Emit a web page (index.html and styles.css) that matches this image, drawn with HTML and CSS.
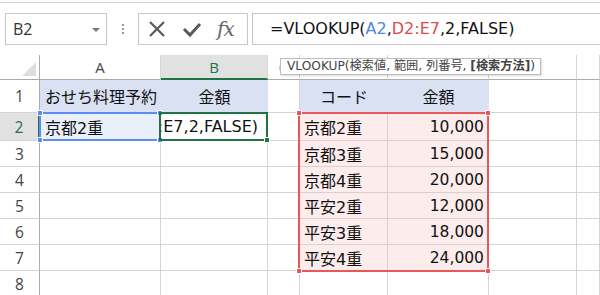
FILE: index.html
```html
<!DOCTYPE html>
<html lang="ja">
<head>
  <meta charset="UTF-8">
  <title>VLOOKUP</title>
  <link rel="stylesheet" href="styles.css">
</head>
<body>
  <div class="toolbar">
    <div class="namebox">
      <span>B2</span>
      <span class="caret"></span>
    </div>
    <div class="grip"><i></i><i></i><i></i></div>
    <div class="buttons">
      <svg width="20" height="20" viewBox="0 0 20 20"><path d="M3 3 L17 17 M17 3 L3 17" stroke="#5a5a5a" stroke-width="2.2" fill="none"/></svg>
      <svg width="20" height="20" viewBox="0 0 20 20"><path d="M2 10 L8 16 L18 5" stroke="#5a5a5a" stroke-width="3" fill="none"/></svg>
      <span class="fx">fx</span>
    </div>
    <div class="formula">=VLOOKUP(<span class="ref-a">A2</span>,<span class="ref-d">D2:E7</span>,2,FALSE)</div>
  </div>

  <div class="sheet">
    <div class="grid">
      <div class="hd corner"><span class="tri"></span></div>
      <div class="hd">A</div>
      <div class="hd sel-col">B</div>
      <div class="hd">C</div>
      <div class="hd">D</div>
      <div class="hd">E</div>
      <div class="hd">F</div>
      <div class="hd"></div>

      <div class="rh">1</div>
      <div class="c head">おせち料理予約</div>
      <div class="c head center">金額</div>
      <div class="c"></div>
      <div class="c head center">コード</div>
      <div class="c head center">金額</div>
      <div class="c"></div>
      <div class="c"></div>

      <div class="rh sel-row">2</div>
      <div class="c key">京都2重</div>
      <div class="c edit"><span>=VLOOKUP(A2,D2:E7,2,FALSE)</span></div>
      <div class="c"></div>
      <div class="c pink">京都2重</div>
      <div class="c pink num">10,000</div>
      <div class="c"></div>
      <div class="c"></div>

      <div class="rh">3</div>
      <div class="c"></div><div class="c"></div><div class="c"></div>
      <div class="c pink">京都3重</div>
      <div class="c pink num">15,000</div>
      <div class="c"></div><div class="c"></div>

      <div class="rh">4</div>
      <div class="c"></div><div class="c"></div><div class="c"></div>
      <div class="c pink">京都4重</div>
      <div class="c pink num">20,000</div>
      <div class="c"></div><div class="c"></div>

      <div class="rh">5</div>
      <div class="c"></div><div class="c"></div><div class="c"></div>
      <div class="c pink">平安2重</div>
      <div class="c pink num">12,000</div>
      <div class="c"></div><div class="c"></div>

      <div class="rh">6</div>
      <div class="c"></div><div class="c"></div><div class="c"></div>
      <div class="c pink">平安3重</div>
      <div class="c pink num">18,000</div>
      <div class="c"></div><div class="c"></div>

      <div class="rh">7</div>
      <div class="c"></div><div class="c"></div><div class="c"></div>
      <div class="c pink">平安4重</div>
      <div class="c pink num">24,000</div>
      <div class="c"></div><div class="c"></div>

      <div class="rh">8</div>
      <div class="c"></div><div class="c"></div><div class="c"></div>
      <div class="c"></div><div class="c"></div><div class="c"></div><div class="c"></div>
    </div>

    <div class="range range-a">
      <i class="h tl"></i><i class="h tr"></i><i class="h bl"></i><i class="h br"></i>
    </div>
    <div class="range range-d">
      <i class="h tl"></i><i class="h tr"></i><i class="h bl"></i><i class="h br"></i>
    </div>
    <div class="active"><i class="fill"></i></div>

    <div class="tip">VLOOKUP(検索値, 範囲, 列番号, <b>[検索方法]</b>)</div>
  </div>
</body>
</html>
```

FILE: styles.css
```css
* {
  margin: 0;
  padding: 0;
  box-sizing: border-box;
}

html,
body {
  width: 600px;
  height: 295px;
  overflow: hidden;
  background: #fff;
  font-family: "DejaVu Sans", "Noto Sans CJK JP", sans-serif;
  color: #111;
}

/* formula bar */
.toolbar {
  margin-top: 2px;
  border-top: 1px solid #d4d4d4;
  height: 53px;
  padding: 10px 0 0 5px;
  display: flex;
  align-items: flex-start;
}

.namebox {
  width: 102px;
  height: 32px;
  border: 1px solid #c6c6c6;
  display: flex;
  align-items: center;
  justify-content: space-between;
  padding: 0 6px 0 7px;
  font-family: "Open Sans", sans-serif;
  font-size: 16px;
  color: #333;
}

.caret {
  border-left: 4px solid transparent;
  border-right: 4px solid transparent;
  border-top: 4px solid #777;
  margin-top: 2px;
}

.grip {
  width: 31px;
  height: 32px;
  display: flex;
  flex-direction: column;
  align-items: center;
  justify-content: center;
  gap: 2px;
}

.grip i {
  width: 2px;
  height: 2px;
  background: #999;
}

.buttons {
  width: 110px;
  height: 32px;
  border: 1px solid #c6c6c6;
  display: flex;
  align-items: center;
  padding-left: 8px;
  gap: 15px;
}

.fx {
  font-family: "DejaVu Serif", "Liberation Serif", serif;
  font-style: italic;
  font-size: 20px;
  color: #666;
  letter-spacing: -1px;
}

.formula {
  margin-left: 4px;
  flex: 1;
  height: 32px;
  border: 1px solid #c6c6c6;
  border-right: none;
  padding-left: 17px;
  font-size: 16px;
  line-height: 30px;
  color: #111;
}

.ref-a {
  color: #4f86e8;
}

.ref-d {
  color: #e0494d;
}

/* sheet */
.sheet {
  position: relative;
}

.grid {
  display: grid;
  grid-template-columns: 40px 121px 107px 32px 88px 101px 88px 1fr;
  grid-template-rows: 25px 33px 28px repeat(6, 26px);
}

.hd {
  border-right: 1px solid #d4d4d4;
  border-bottom: 1px solid #ababab;
  display: flex;
  align-items: center;
  justify-content: center;
  font-family: "Open Sans", sans-serif;
  font-size: 15px;
  color: #444;
}

.corner {
  border-right: 1px solid #ababab;
  position: relative;
}

.tri {
  position: absolute;
  right: 3px;
  bottom: 3px;
  border-left: 14px solid transparent;
  border-bottom: 14px solid #dedede;
}

.sel-col {
  background: #e1e1e1;
  color: #217346;
  border-bottom: 2px solid #217346;
}

.rh {
  border-right: 1px solid #ababab;
  border-bottom: 1px solid #d4d4d4;
  display: flex;
  align-items: center;
  justify-content: center;
  font-family: "Open Sans", sans-serif;
  font-size: 15.5px;
  color: #444;
}

.sel-row {
  background: #e1e1e1;
  color: #217346;
  border-right: 2px solid #217346;
}

.c {
  border-right: 1px solid #d4d4d4;
  border-bottom: 1px solid #d4d4d4;
  display: flex;
  align-items: center;
  padding: 0 4px;
  font-size: 16px;
  white-space: nowrap;
  overflow: hidden;
}

.head {
  background: #d9e1f2;
  border-right-color: #d9e1f2;
  padding-left: 5px;
}

.center {
  justify-content: center;
}

.key {
  background: #eaf0fb;
  padding-left: 5px;
}

.edit {
  justify-content: flex-end;
  padding-right: 9px;
  font-size: 16px;
}

.edit span {
  flex-shrink: 0;
}

.pink {
  background: #fcecec;
  border-color: #d9cfcf;
}

.num {
  justify-content: flex-end;
  font-size: 15.5px;
}

/* range highlights */
.range {
  position: absolute;
  border: 2px solid;
}

.range-a {
  left: 39px;
  top: 57px;
  width: 122px;
  height: 29px;
  border-color: #5b8ef0;
}

.range-d {
  left: 298px;
  top: 57px;
  width: 191px;
  height: 160px;
  border-color: #e8585b;
}

.h {
  position: absolute;
  width: 6px;
  height: 6px;
  border: 1px solid #fff;
}

.range-a .h {
  background: #5b8ef0;
}

.range-d .h {
  background: #e8585b;
}

.tl {
  left: -4px;
  top: -4px;
}

.tr {
  right: -4px;
  top: -4px;
}

.bl {
  left: -4px;
  bottom: -4px;
}

.br {
  right: -4px;
  bottom: -4px;
}

.active {
  position: absolute;
  left: 159px;
  top: 57px;
  width: 109px;
  height: 29px;
  border: 2px solid #217346;
}

.fill {
  position: absolute;
  right: -4px;
  bottom: -4px;
  width: 6px;
  height: 6px;
  background: #217346;
  border: 1px solid #fff;
}

.tip {
  position: absolute;
  left: 280px;
  top: 3px;
  height: 17px;
  background: #fff;
  border: 1px solid #bdbdbd;
  box-shadow: 1px 1px 2px rgba(0, 0, 0, .15);
  font-size: 12.2px;
  line-height: 15px;
  color: #444;
  padding: 0 5px 0 6px;
  white-space: nowrap;
}

.tip b {
  font-weight: bold;
}
```
